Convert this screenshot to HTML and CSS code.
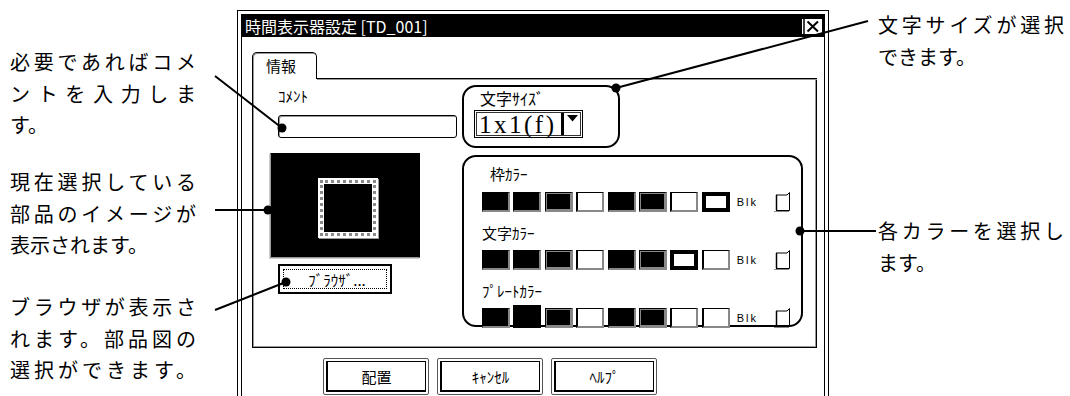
FILE: index.html
```html
<!DOCTYPE html>
<html lang="ja">
<head>
    <meta charset="UTF-8">
    <meta name="viewport" content="width=device-width, initial-scale=1.0">
    <title>時間表示器設定</title>
    <link rel="stylesheet" href="styles.css">
</head>
<body>
    <div class="page">
        <div class="notes notes-left">
            <p class="note note-comment">
                <span class="ln fill">必要であればコメ</span>
                <span class="ln fill">ントを入力しま</span>
                <span class="ln">す。</span>
            </p>
            <p class="note note-preview">
                <span class="ln fill">現在選択している</span>
                <span class="ln fill">部品のイメージが</span>
                <span class="ln">表示されます。</span>
            </p>
            <p class="note note-browser">
                <span class="ln fill">ブラウザが表示さ</span>
                <span class="ln fill">れます。部品図の</span>
                <span class="ln fill">選択ができます。</span>
            </p>
        </div>

        <div class="window">
            <div class="frame">
                <div class="titlebar">
                    <span>時間表示器設定 [TD_001]</span>
                    <svg class="close" width="22" height="17" viewBox="0 0 22 17">
                        <rect x="0.5" y="0.5" width="21" height="16" fill="#fff" stroke="#000"/>
                        <path d="M3 1V16" stroke="#000" stroke-width="1.5"/>
                        <path d="M6.5 3.5L17 13.5M17 3.5L6.5 13.5" stroke="#000" stroke-width="2"/>
                    </svg>
                </div>
                <div class="body">
                    <div class="tabs">
                        <div class="tab">情報</div>
                        <div class="tab-rest"></div>
                    </div>
                    <div class="panel">
                        <div class="col-left">
                            <div class="label comment-label">ｺﾒﾝﾄ</div>
                            <div class="input"></div>
                            <div class="preview">
                                <div class="preview-frame"><div class="preview-core"></div></div>
                            </div>
                            <div class="browse"><span>ﾌﾞﾗｳｻﾞ...</span></div>
                        </div>
                        <div class="col-right">
                            <div class="group size-group">
                                <div class="label size-label">文字ｻｲｽﾞ</div>
                                <div class="select">
                                    <span class="select-value">1x1(f)</span>
                                    <span class="select-btn">
                                        <svg width="11" height="7" viewBox="0 0 11 7"><path d="M0 0H11L5.5 6.5Z" fill="#000"/></svg>
                                    </span>
                                </div>
                            </div>
                            <div class="group color-group">
                                <div class="label clabel clabel-first">枠ｶﾗｰ</div>
                                <div class="crow">
                                    <div class="swatches">
                                        <span class="sw k"></span><span class="sw k"></span><span class="sw d"></span><span class="sw w"></span>
                                        <span class="sw k"></span><span class="sw d"></span><span class="sw w"></span><span class="sw s"></span>
                                    </div>
                                    <span class="blk">Blk</span>
                                    <svg class="check" width="18" height="20" viewBox="0 0 18 20">
                                        <path d="M3 3H14L16.5 0.5V18.5H3" fill="none" stroke="#000"/>
                                        <path d="M3.5 3V18" stroke="#000" stroke-width="1.5"/>
                                        <path d="M1 19.5H16" stroke="#888"/>
                                    </svg>
                                </div>
                                <div class="label clabel">文字ｶﾗｰ</div>
                                <div class="crow">
                                    <div class="swatches">
                                        <span class="sw k"></span><span class="sw k"></span><span class="sw d"></span><span class="sw w"></span>
                                        <span class="sw k"></span><span class="sw d"></span><span class="sw s"></span><span class="sw w"></span>
                                    </div>
                                    <span class="blk">Blk</span>
                                    <svg class="check" width="18" height="20" viewBox="0 0 18 20">
                                        <path d="M3 3H14L16.5 0.5V18.5H3" fill="none" stroke="#000"/>
                                        <path d="M3.5 3V18" stroke="#000" stroke-width="1.5"/>
                                        <path d="M1 19.5H16" stroke="#888"/>
                                    </svg>
                                </div>
                                <div class="label clabel">ﾌﾟﾚｰﾄｶﾗｰ</div>
                                <div class="crow">
                                    <div class="swatches">
                                        <span class="sw k"></span><span class="sw ks"></span><span class="sw d"></span><span class="sw w"></span>
                                        <span class="sw k"></span><span class="sw d"></span><span class="sw w"></span><span class="sw w"></span>
                                    </div>
                                    <span class="blk">Blk</span>
                                    <svg class="check" width="18" height="20" viewBox="0 0 18 20">
                                        <path d="M3 3H14L16.5 0.5V18.5H3" fill="none" stroke="#000"/>
                                        <path d="M3.5 3V18" stroke="#000" stroke-width="1.5"/>
                                        <path d="M1 19.5H16" stroke="#888"/>
                                    </svg>
                                </div>
                            </div>
                        </div>
                    </div>
                    <div class="buttons">
                        <div class="btn"><span>配置</span></div>
                        <div class="btn"><span>ｷｬﾝｾﾙ</span></div>
                        <div class="btn"><span>ﾍﾙﾌﾟ</span></div>
                    </div>
                </div>
            </div>
        </div>

        <div class="notes notes-right">
            <p class="note note-size">
                <span class="ln fill">文字サイズが選択</span>
                <span class="ln">できます。</span>
            </p>
            <p class="note note-colors">
                <span class="ln fill">各カラーを選択し</span>
                <span class="ln">ます。</span>
            </p>
        </div>
    </div>

    <!-- leader lines from the notes to the dialog parts -->
    <svg class="leaders" width="1070" height="396" viewBox="0 0 1070 396">
        <g stroke="#000" stroke-width="2" fill="none">
            <path d="M215 76L282 128"/>
            <path d="M215 210H268"/>
            <path d="M215 310L286 282"/>
            <path d="M616 88L868 21"/>
            <path d="M800 231H876"/>
        </g>
        <g fill="#000">
            <circle cx="282" cy="128" r="4.5"/>
            <circle cx="268" cy="210" r="4.5"/>
            <circle cx="286" cy="282" r="4.5"/>
            <circle cx="616" cy="88" r="4.5"/>
            <circle cx="800" cy="231" r="4.5"/>
        </g>
    </svg>
</body>
</html>
```

FILE: styles.css
```css
* {
    box-sizing: border-box;
}
html, body {
    margin: 0;
}
body {
    position: relative;
    width: 1070px;
    height: 396px;
    overflow: hidden;
    background: #fff;
    color: #000;
    font-family: "Noto Sans CJK JP", "Noto Sans", sans-serif;
}
.page {
    display: flex;
    align-items: flex-start;
    padding-left: 10px;
    height: 396px;
}

/* notes */
.notes {
    width: 186px;
    flex: none;
    display: flex;
    flex-direction: column;
}
.note {
    margin: 0;
    font-size: 20px;
    line-height: 31.5px;
}
.ln {
    display: block;
    white-space: nowrap;
}
.ln.fill {
    text-align: justify;
    text-align-last: justify;
}
.note-comment {
    margin-top: 46px;
}
.note-preview {
    margin-top: 25.5px;
}
.note-browser {
    margin-top: 30.5px;
}
.notes-right {
    margin-left: 49px;
}
.note-size {
    margin-top: 9px;
}
.note-colors {
    margin-top: 143px;
}

/* dialog window */
.window {
    flex: none;
    margin-left: 41px;
    margin-top: 10px;
    width: 592px;
    height: 420px;
    border: 1px solid #000;
    padding: 3px;
    background: #fff;
}
.frame {
    height: 100%;
    border: 1px solid #000;
}
.titlebar {
    height: 22px;
    background: #000;
    color: #fff;
    display: flex;
    align-items: center;
    justify-content: space-between;
    padding: 0 1px 0 3px;
    font-size: 16px;
}
.close {
    display: block;
}
.body {
    padding: 15px 7px 0 10px;
}
.label {
    font-size: 15px;
    line-height: 16px;
}

/* tab */
.tabs {
    display: flex;
    align-items: flex-end;
    height: 27px;
}
.tab {
    width: 65px;
    height: 27px;
    border: 1px solid #000;
    border-bottom: none;
    border-radius: 5px 5px 0 0;
    box-shadow: inset 1px 1px 0 #999;
    padding: 4px 0 0 13px;
    font-size: 15px;
    line-height: 17px;
}
.tab-rest {
    flex: 1;
    border-bottom: 1px solid #000;
    box-shadow: 0 1px 0 #999;
    border-top: 1px solid transparent;
}
.panel {
    height: 269px;
    border: 1px solid #000;
    border-top: none;
    box-shadow: inset 1px 0 0 #999, inset -1px -1px 0 #999;
    display: grid;
    grid-template-columns: 187px 341px;
    column-gap: 5px;
    align-items: start;
    padding: 6px 0 0 17px;
}

/* left column */
.col-left {
    display: flex;
    flex-direction: column;
    align-items: flex-start;
}
.comment-label {
    margin: 3px 0 0 8px;
}
.input {
    margin: 11px 0 0 8px;
    width: 179px;
    height: 23px;
    border: 1px solid #000;
    border-radius: 3px;
    box-shadow: inset 1px 1px 0 #999;
}
.preview {
    margin-top: 15px;
    width: 150px;
    height: 105px;
    background: #000;
    border: 1px solid #000;
    border-left-color: #999;
    border-bottom-color: #999;
    box-shadow: -1px 1px 0 #ccc;
    display: flex;
    align-items: center;
    justify-content: center;
    padding: 4px 0 0 6px;
}
.preview-frame {
    width: 60px;
    height: 60px;
    background: #fff;
    padding: 2px;
    box-shadow: 1px 1px 0 #999;
}
.preview-core {
    height: 100%;
    border: 3px dotted #888;
    background: #000;
    background-clip: padding-box;
    box-shadow: inset 0 0 0 1px #fff;
}
.browse {
    margin: 6px 0 0 8px;
    width: 114px;
    height: 30px;
    border: 2px solid #000;
    padding: 3px;
}
.browse span {
    display: flex;
    align-items: center;
    justify-content: center;
    height: 100%;
    border: 1px dotted #000;
    font-size: 15px;
    padding-left: 4px;
}

/* right column */
.col-right {
    display: flex;
    flex-direction: column;
}
.group {
    border: 2px solid #000;
    border-radius: 14px;
}
.size-group {
    width: 158px;
    height: 63px;
    padding: 3px 0 0 10px;
}
.size-label {
    margin-left: 6px;
    font-size: 16px;
}
.select {
    margin-top: 4px;
    width: 109px;
    height: 28px;
    display: flex;
    border: 1px solid #000;
    box-shadow: inset 0 0 0 1px #fff, inset 0 0 0 2px #333;
    padding: 2px;
}
.select-value {
    flex: 1;
    font-family: "Liberation Serif", serif;
    font-size: 25px;
    line-height: 24px;
    letter-spacing: 2.5px;
    padding-left: 2px;
    white-space: nowrap;
}
.select-btn {
    flex: none;
    width: 19px;
    border-left: 3px solid #000;
    display: flex;
    justify-content: center;
    padding-top: 2px;
}
.color-group {
    margin-top: 7px;
    width: 341px;
    height: 172px;
    padding: 6px 0 0 18px;
}
.clabel {
    height: 22px;
    line-height: 22px;
    margin-top: 10px;
    margin-bottom: 6px;
}
.clabel-first {
    margin: 0 0 7px 8px;
}
.crow {
    display: flex;
    align-items: center;
    height: 20px;
}
.swatches {
    display: flex;
    gap: 3.4px;
}
.sw {
    display: block;
    width: 28px;
    height: 20px;
    border: 1px solid #000;
    border-right: 2px solid #888;
    border-bottom: 2px solid #888;
}
.sw.k {
    background: #000;
}
.sw.d {
    background: #000;
    box-shadow: inset 0 0 0 1px #888;
}
.sw.w {
    background: #fff;
    border-left-width: 2px;
}
.sw.s {
    background: #fff;
    border: 4px solid #000;
}
.sw.ks {
    background: #000;
    border: 1px solid #000;
    height: 23px;
    margin-top: -3px;
}
.blk {
    margin-left: 7px;
    font-family: "Liberation Sans", sans-serif;
    font-size: 11px;
    letter-spacing: 2px;
    width: 36px;
}
.check {
    display: block;
}

/* bottom buttons */
.buttons {
    display: flex;
    gap: 8px;
    margin-top: 10px;
    padding-left: 71px;
}
.btn {
    width: 106px;
    height: 37px;
    border: 1px solid #555;
    border-radius: 2px;
    padding: 2px;
}
.btn span {
    display: flex;
    align-items: center;
    justify-content: center;
    height: 100%;
    border: 1px solid #000;
    border-left-width: 2px;
    border-bottom-width: 2px;
    font-size: 15px;
}

.leaders {
    position: absolute;
    top: 0;
    left: 0;
    pointer-events: none;
}
```
